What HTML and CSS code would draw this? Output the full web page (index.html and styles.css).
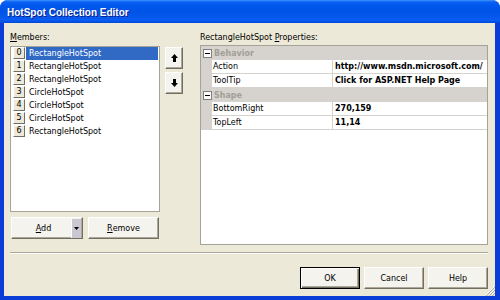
FILE: index.html
```html
<!DOCTYPE html>
<html lang="en">
  <head>
    <meta charset="UTF-8" />
    <title>HotSpot Collection Editor</title>
    <link rel="stylesheet" href="styles.css">
  </head>
  <body>
    <div class="window">
      <div class="titlebar">HotSpot Collection Editor</div>

      <div class="client">
        <div class="main">
          <div class="members">
            <div class="label"><u>M</u>embers:</div>
            <div class="list">
              <div class="item selected"><span class="num">0</span><span class="name">RectangleHotSpot</span></div>
              <div class="item"><span class="num">1</span><span class="name">RectangleHotSpot</span></div>
              <div class="item"><span class="num">2</span><span class="name">RectangleHotSpot</span></div>
              <div class="item"><span class="num">3</span><span class="name">CircleHotSpot</span></div>
              <div class="item"><span class="num">4</span><span class="name">CircleHotSpot</span></div>
              <div class="item"><span class="num">5</span><span class="name">CircleHotSpot</span></div>
              <div class="item"><span class="num">6</span><span class="name">RectangleHotSpot</span></div>
            </div>
            <div class="list-buttons">
              <div class="btn add">
                <span class="add-label"><u>A</u>dd</span>
                <span class="drop">
                  <svg width="5" height="3" viewBox="0 0 5 3"><polygon points="0,0 5,0 2.5,3" fill="#000"/></svg>
                </span>
              </div>
              <div class="btn remove"><u>R</u>emove</div>
            </div>
          </div>

          <div class="arrows">
            <div class="btn arrow">
              <svg width="7" height="8" viewBox="0 0 7 8"><polygon points="3.5,0 7,4 5,4 5,8 2,8 2,4 0,4" fill="#000"/></svg>
            </div>
            <div class="btn arrow">
              <svg width="7" height="8" viewBox="0 0 7 8"><polygon points="3.5,8 7,4 5,4 5,0 2,0 2,4 0,4" fill="#000"/></svg>
            </div>
          </div>

          <div class="props">
            <div class="label">RectangleHotSpot <u>P</u>roperties:</div>
            <div class="grid">
              <div class="cat"><span class="toggle"></span>Behavior</div>
              <div class="prop"><span class="pname">Action</span><span class="pval">http://www.msdn.microsoft.com/</span></div>
              <div class="prop"><span class="pname">ToolTip</span><span class="pval">Click for ASP.NET Help Page</span></div>
              <div class="cat"><span class="toggle"></span>Shape</div>
              <div class="prop"><span class="pname">BottomRight</span><span class="pval">270,159</span></div>
              <div class="prop"><span class="pname">TopLeft</span><span class="pval">11,14</span></div>
            </div>
          </div>
        </div>

        <div class="separator"></div>

        <div class="footer">
          <div class="btn dialog default">OK</div>
          <div class="btn dialog">Cancel</div>
          <div class="btn dialog">Help</div>
        </div>
      </div>

      <svg class="grip" width="10" height="10" viewBox="0 0 10 10">
        <path d="M9 1L1 9M9 4L4 9M9 7L7 9" stroke="#fff" stroke-width="1"/>
        <path d="M10 1L1 10M10 4L4 10M10 7L7 10" stroke="#ACA899" stroke-width="1"/>
      </svg>
    </div>
  </body>
</html>
```

FILE: styles.css
```css
body {
  margin: 0;
  padding: 0;
  background-color: #fff;
  font-family: "DejaVu Sans", Tahoma, sans-serif;
  font-size: 8px;
  color: #000;
}
.window {
  position: relative;
  width: 500px;
  height: 300px;
  box-sizing: border-box;
  display: flex;
  flex-direction: column;
  background-color: #0A3CD8;
  border-radius: 8px 8px 0 0;
  overflow: hidden;
}
.titlebar {
  height: 20px;
  padding: 3px 0 0 7px;
  line-height: 20px;
  font-family: "Liberation Sans", Arial, sans-serif;
  font-size: 10px;
  font-weight: bold;
  color: #fff;
  text-shadow: 1px 1px 0 #0A1E8C;
  background: linear-gradient(#3D95FF 0, #0A61F2 2px, #0058EE 5px, #0053E6 55%, #0A5CF2 88%, #0046D8 100%);
}
.client {
  flex: 1;
  margin: 0 5px 4px 4px;
  padding: 8px 7px 0 6px;
  background-color: #ECE9D8;
  display: flex;
  flex-direction: column;
}
.main {
  display: flex;
  align-items: flex-start;
}
.label {
  height: 14px;
  line-height: 14px;
}
.members {
  width: 150px;
}
.list {
  margin-top: 1px;
  height: 166px;
  box-sizing: border-box;
  border: 1px solid #A5A397;
  background-color: #fff;
  padding-left: 1px;
}
.item {
  display: flex;
  height: 13px;
}
.num {
  width: 12px;
  height: 12px;
  box-sizing: border-box;
  margin-left: 1px;
  border: 1px solid;
  border-color: #fff #716F64 #716F64 #fff;
  background-color: #ECE9D8;
  text-align: center;
  line-height: 10px;
}
.name {
  margin-left: 1px;
  width: 132px;
  height: 13px;
  padding-left: 3px;
  box-sizing: border-box;
  line-height: 13px;
  white-space: nowrap;
}
.item.selected .name {
  background-color: #316AC5;
  color: #fff;
}
.btn {
  box-sizing: border-box;
  display: flex;
  align-items: center;
  justify-content: center;
  background-color: #F4F3EE;
  border: 1px solid;
  border-color: #fff #716F64 #716F64 #fff;
  box-shadow: inset -1px -1px 0 #ACA899;
}
.list-buttons {
  display: flex;
  gap: 5px;
  margin-top: 5px;
  margin-left: 1px;
}
.add {
  width: 72px;
  height: 22px;
  justify-content: flex-start;
}
.add-label {
  flex: 1;
  text-align: center;
  padding-left: 4px;
}
.drop {
  width: 9px;
  height: 19px;
  margin-right: 1px;
  display: flex;
  align-items: center;
  justify-content: center;
  background-color: #C9C8D2;
  border-left: 1px solid #fff;
}
.remove {
  width: 71px;
  height: 22px;
}
.arrows {
  display: flex;
  flex-direction: column;
  gap: 3px;
  margin-left: 5px;
  margin-top: 16px;
}
.arrow {
  width: 18px;
  height: 22px;
}
.props {
  flex: 1;
  margin-left: 17px;
}
.grid {
  height: 200px;
  box-sizing: border-box;
  border: 1px solid #A5A397;
  background-color: #fff;
}
.cat {
  display: flex;
  align-items: center;
  height: 14px;
  background-color: #D6D3CE;
  color: #A19F97;
  font-weight: bold;
}
.toggle {
  position: relative;
  width: 9px;
  height: 9px;
  box-sizing: border-box;
  margin: 0 2px 0 2px;
  border: 1px solid #7F7F7F;
  background-color: #fff;
}
.toggle::after {
  content: "";
  position: absolute;
  left: 1px;
  top: 3px;
  width: 5px;
  height: 1px;
  background-color: #000;
}
.prop {
  display: flex;
  height: 14px;
  box-sizing: border-box;
  border-left: 11px solid #D6D3CE;
  border-bottom: 1px solid #D6D3CE;
  line-height: 13px;
}
.pname {
  width: 121px;
  padding-left: 1px;
  box-sizing: border-box;
  border-right: 1px solid #D6D3CE;
}
.pval {
  flex: 1;
  padding-left: 2px;
  font-weight: bold;
  white-space: nowrap;
  overflow: hidden;
}
.separator {
  margin-top: 7px;
  border-top: 1px solid #ACA899;
  border-bottom: 1px solid #fff;
}
.footer {
  display: flex;
  justify-content: flex-end;
  gap: 4px;
  margin-top: 13px;
}
.dialog {
  width: 60px;
  height: 22px;
}
.dialog.default {
  border-color: #000;
  box-shadow: inset 1px 1px 0 #fff, inset -1px -1px 0 #716F64, inset -2px -2px 0 #ACA899;
}
.grip {
  position: absolute;
  right: 5px;
  bottom: 4px;
}
```
